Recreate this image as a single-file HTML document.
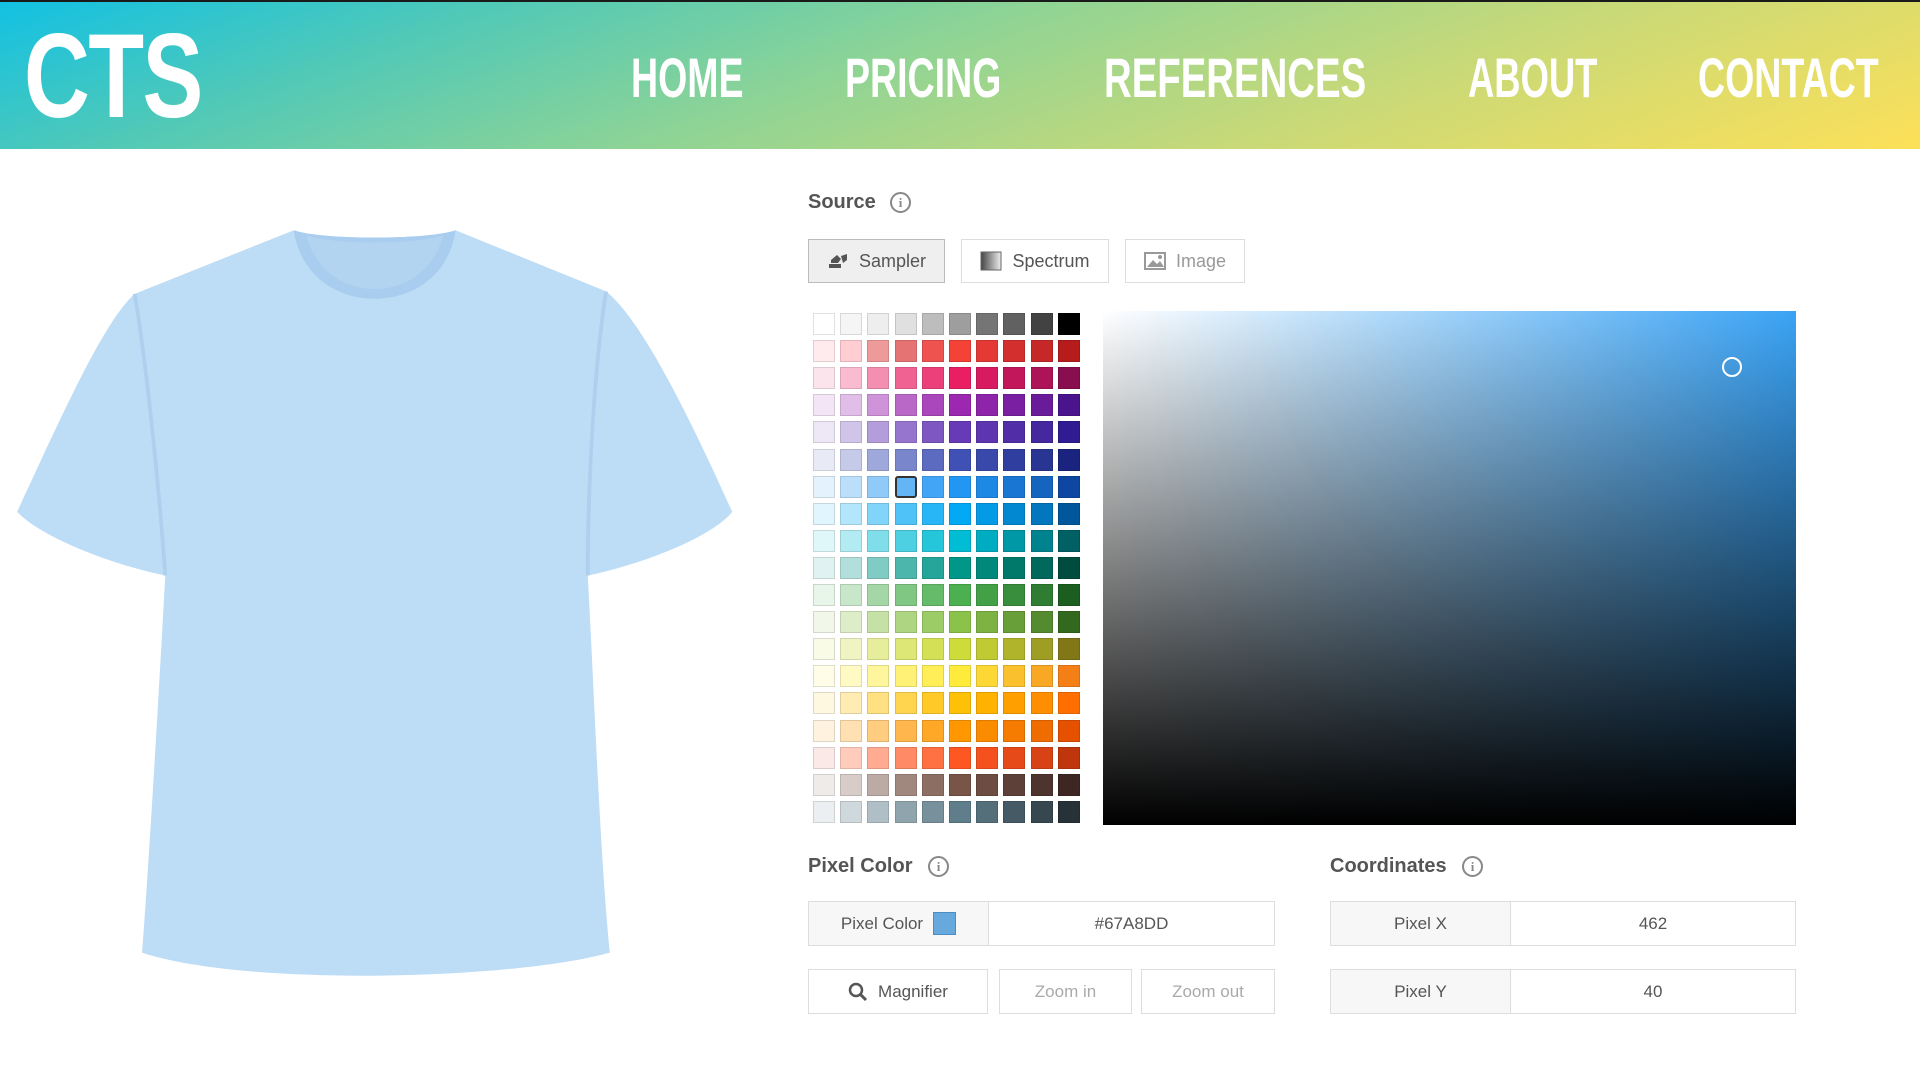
<!DOCTYPE html>
<html><head><meta charset="utf-8"><style>
*{margin:0;padding:0;box-sizing:border-box}
body{width:1920px;height:1080px;overflow:hidden;background:#fff;font-family:"Liberation Sans",sans-serif;position:relative}
.hdr{position:absolute;left:0;top:0;width:1920px;height:149px;border-top:2px solid #1a1a1a;background:linear-gradient(160deg,#12c1e3 0%,#52c9b6 22%,#8fd495 45%,#c8d978 70%,#fde058 100%)}
.logo{position:absolute;left:24px;top:14px;font-weight:bold;color:#fff;font-size:120px;line-height:120px;transform:scaleX(0.76);transform-origin:left;letter-spacing:-2px}
.nav{position:absolute;top:44px;font-weight:bold;color:#fff;font-size:56px;line-height:64px;white-space:nowrap;transform:scaleX(0.67);transform-origin:left}
.lbl{position:absolute;font-size:20px;font-weight:bold;color:#555}
.info{position:absolute;width:21px;height:21px;border:2px solid #888;border-radius:50%;color:#888;font-size:13px;font-weight:bold;text-align:center;line-height:17px;font-family:"Liberation Serif",serif}
.btn{position:absolute;border:1px solid #ddd;background:#fff;color:#555;font-size:18px;display:flex;align-items:center;justify-content:center;gap:10px}
.cell{position:absolute;width:22px;height:22px;border:1px solid rgba(0,0,0,.12)}
.box{position:absolute;border:1px solid #ddd;display:flex;font-size:17px;color:#555}
.box div{display:flex;align-items:center;justify-content:center}
</style></head><body>
<div class="hdr">
<div class="logo">CTS</div>
<div class="nav" style="left:631px">HOME</div>
<div class="nav" style="left:845px">PRICING</div>
<div class="nav" style="left:1104px;transform:scaleX(0.685)">REFERENCES</div>
<div class="nav" style="left:1468px;transform:scaleX(0.65)">ABOUT</div>
<div class="nav" style="left:1698px">CONTACT</div>
</div>

<svg style="position:absolute;left:0;top:0" width="1920" height="1080" viewBox="0 0 1568 882">
<path d="M240,188 C262,196 350,196 372,188 L495,238 C525,262 565,345 598,418 C580,440 520,462 480,470 C485,560 490,700 498,778 C420,800 200,806 116,778 C122,700 130,560 135,470 C95,462 35,440 14,418 C50,340 85,262 110,240 Z" fill="#bddcf6"/>
<path d="M240,188 C245,225 275,244 306,244 C337,244 367,225 372,188 C350,196 262,196 240,188Z" fill="#a9cdee"/>
<path d="M250,192 C258,222 282,236 306,236 C330,236 354,222 362,192 C340,200 272,200 250,192Z" fill="#b3d4f1"/>
<path d="M110,240 C120,300 130,400 135,470" stroke="#aecfee" stroke-width="3" fill="none"/>
<path d="M495,238 C485,300 480,400 480,470" stroke="#aecfee" stroke-width="3" fill="none"/>
</svg>

<div class="lbl" style="left:808px;top:191px">Source</div>
<div class="info" style="left:890px;top:192px">i</div>
<div class="btn" style="left:808px;top:239px;width:137px;height:44px;background:#efefef;border-color:#bbb"><svg width="22" height="18" viewBox="0 0 22 18"><path d="M2 12h12v4H2z M4 8l6-5 4 4-3 4H4z M14 4l6-2v6l-4 3z" fill="#555"/></svg>Sampler</div>
<div class="btn" style="left:961px;top:239px;width:148px;height:44px"><svg width="22" height="20"><defs><linearGradient id="sg"><stop offset="0" stop-color="#444"/><stop offset="1" stop-color="#eee"/></linearGradient></defs><rect x="1" y="1" width="20" height="18" fill="url(#sg)" stroke="#666"/></svg>Spectrum</div>
<div class="btn" style="left:1125px;top:239px;width:120px;height:44px;color:#999"><svg width="22" height="18"><rect x="1" y="1" width="20" height="16" fill="none" stroke="#999" stroke-width="2"/><path d="M3 15l6-7 4 4 3-3 4 6z" fill="#999"/><circle cx="16" cy="5" r="2" fill="#999"/></svg>Image</div>

<div id="grid"></div>

<div style="position:absolute;left:1103px;top:311px;width:693px;height:514px;background:linear-gradient(to right,#fff,#3aa3f5)"></div>
<div style="position:absolute;left:1103px;top:311px;width:693px;height:514px;background:linear-gradient(to bottom,rgba(0,0,0,0),#000)"></div>
<div style="position:absolute;left:1722px;top:357px;width:20px;height:20px;border:2px solid #fff;border-radius:50%"></div>

<div class="lbl" style="left:808px;top:855px">Pixel Color</div>
<div class="info" style="left:928px;top:856px">i</div>
<div class="lbl" style="left:1330px;top:855px">Coordinates</div>
<div class="info" style="left:1462px;top:856px">i</div>

<div class="box" style="left:808px;top:901px;width:467px;height:45px"><div style="width:180px;background:#f7f7f7;border-right:1px solid #ddd;gap:10px">Pixel Color <span style="display:inline-block;width:23px;height:23px;background:#67a8dd;border:1px solid #4a8cc6"></span></div><div style="flex:1">#67A8DD</div></div>
<div class="box" style="left:1330px;top:901px;width:466px;height:45px"><div style="width:180px;background:#f7f7f7;border-right:1px solid #ddd">Pixel X</div><div style="flex:1">462</div></div>
<div class="box" style="left:1330px;top:969px;width:466px;height:45px"><div style="width:180px;background:#f7f7f7;border-right:1px solid #ddd">Pixel Y</div><div style="flex:1">40</div></div>
<div class="btn" style="left:808px;top:969px;width:180px;height:45px;font-size:17px"><svg width="20" height="20"><circle cx="8" cy="8" r="6" fill="none" stroke="#555" stroke-width="2.5"/><path d="M12 12l6 6" stroke="#555" stroke-width="3"/></svg>Magnifier</div>
<div class="btn" style="left:999px;top:969px;width:133px;height:45px;font-size:17px;color:#aaa">Zoom in</div>
<div class="btn" style="left:1141px;top:969px;width:134px;height:45px;font-size:17px;color:#aaa">Zoom out</div>

<script>
var rows=["ffffff f5f5f5 eeeeee e0e0e0 bdbdbd 9e9e9e 757575 616161 424242 000000",
"ffebee ffcdd2 ef9a9a e57373 ef5350 f44336 e53935 d32f2f c62828 b71c1c",
"fce4ec f8bbd0 f48fb1 f06292 ec407a e91e63 d81b60 c2185b ad1457 880e4f",
"f3e5f5 e1bee7 ce93d8 ba68c8 ab47bc 9c27b0 8e24aa 7b1fa2 6a1b9a 4a148c",
"ede7f6 d1c4e9 b39ddb 9575cd 7e57c2 673ab7 5e35b1 512da8 4527a0 311b92",
"e8eaf6 c5cae9 9fa8da 7986cb 5c6bc0 3f51b5 3949ab 303f9f 283593 1a237e",
"e3f2fd bbdefb 90caf9 64b5f6 42a5f5 2196f3 1e88e5 1976d2 1565c0 0d47a1",
"e1f5fe b3e5fc 81d4fa 4fc3f7 29b6f6 03a9f4 039be5 0288d1 0277bd 01579b",
"e0f7fa b2ebf2 80deea 4dd0e1 26c6da 00bcd4 00acc1 0097a7 00838f 006064",
"e0f2f1 b2dfdb 80cbc4 4db6ac 26a69a 009688 00897b 00796b 00695c 004d40",
"e8f5e9 c8e6c9 a5d6a7 81c784 66bb6a 4caf50 43a047 388e3c 2e7d32 1b5e20",
"f1f8e9 dcedc8 c5e1a5 aed581 9ccc65 8bc34a 7cb342 689f38 558b2f 33691e",
"f9fbe7 f0f4c3 e6ee9c dce775 d4e157 cddc39 c0ca33 afb42b 9e9d24 827717",
"fffde7 fff9c4 fff59d fff176 ffee58 ffeb3b fdd835 fbc02d f9a825 f57f17",
"fff8e1 ffecb3 ffe082 ffd54f ffca28 ffc107 ffb300 ffa000 ff8f00 ff6f00",
"fff3e0 ffe0b2 ffcc80 ffb74d ffa726 ff9800 fb8c00 f57c00 ef6c00 e65100",
"fbe9e7 ffccbc ffab91 ff8a65 ff7043 ff5722 f4511e e64a19 d84315 bf360c",
"efebe9 d7ccc8 bcaaa4 a1887f 8d6e63 795548 6d4c41 5d4037 4e342e 3e2723",
"eceff1 cfd8dc b0bec5 90a4ae 78909c 607d8b 546e7a 455a64 37474f 263238"];
var h="";
rows.forEach(function(r,i){r.split(" ").forEach(function(c,j){
var sel=(i==6&&j==3);
h+='<div class="cell" style="left:'+(813+j*27.2)+'px;top:'+(313+i*27.1)+'px;background:#'+c+(sel?';border:2px solid #333;border-radius:3px':'')+'"></div>';});});
document.getElementById("grid").innerHTML=h;
</script>
</body></html>
